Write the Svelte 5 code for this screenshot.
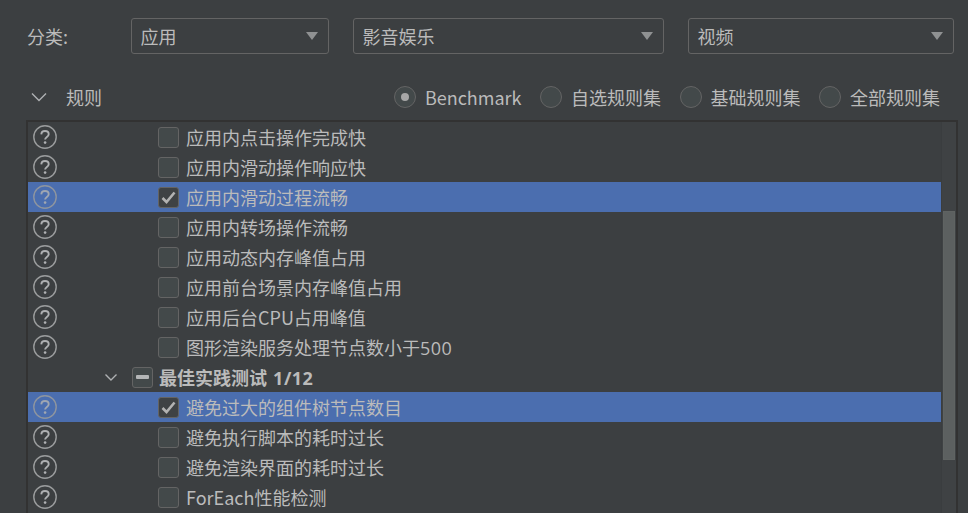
<script>
	const filters = [
		{ label: '应用', width: 198 },
		{ label: '影音娱乐', width: 311 },
		{ label: '视频', width: 266 }
	];
	const ruleSets = [
		{ label: 'Benchmark', checked: true },
		{ label: '自选规则集' },
		{ label: '基础规则集' },
		{ label: '全部规则集' }
	];
	const rows = [
		{ text: '应用内点击操作完成快' },
		{ text: '应用内滑动操作响应快' },
		{ text: '应用内滑动过程流畅', checked: true },
		{ text: '应用内转场操作流畅' },
		{ text: '应用动态内存峰值占用' },
		{ text: '应用前台场景内存峰值占用' },
		{ text: '应用后台CPU占用峰值' },
		{ text: '图形渲染服务处理节点数小于', num: '500' },
		{ text: '最佳实践测试 ', num: '1/12', group: true },
		{ text: '避免过大的组件树节点数目', checked: true },
		{ text: '避免执行脚本的耗时过长' },
		{ text: '避免渲染界面的耗时过长' },
		{ text: 'ForEach性能检测' }
	];
</script>

<div class="page">
	<div class="filters">
		<span class="filter-label">分类:</span>
		{#each filters as f}
			<div class="select" style="width: {f.width}px">
				<span>{f.label}</span>
				<i class="caret"></i>
			</div>
		{/each}
	</div>

	<div class="rules-head">
		<svg class="chevron" width="16" height="10" viewBox="0 0 16 10">
			<path d="M1 1.5 L8 8.5 L15 1.5" fill="none" stroke="#afb1b3" stroke-width="1.4" />
		</svg>
		<span class="rules-title">规则</span>
		<div class="radios">
			{#each ruleSets as r}
				<div class="radio-item">
					<span class="radio" class:on={r.checked}></span>
					<span class="radio-text">{r.label}</span>
				</div>
			{/each}
		</div>
	</div>

	<div class="panel">
		<div class="tree">
			{#each rows as row}
				<div class="row" class:selected={row.checked}>
					{#if row.group}
						<svg class="group-chevron" width="14" height="9" viewBox="0 0 14 9">
							<path d="M1.5 1.5 L7 7 L12.5 1.5" fill="none" stroke="#afb1b3" stroke-width="1.4" />
						</svg>
						<span class="box partial"><i></i></span>
						<span class="group-text">{row.text}<span class="num">{row.num}</span></span>
					{:else}
						<svg class="help" width="24" height="24" viewBox="0 0 24 24">
							<circle cx="12" cy="12" r="11.2" fill="none" stroke="#9a9c9d" stroke-width="1.4" />
							<path d="M8.3 9.4 C8.4 7.1 10 6 12 6 C14.1 6 15.7 7.3 15.7 9.2 C15.7 12 12.1 11.9 12.1 14.6" fill="none" stroke="#afb1b3" stroke-width="1.9" />
							<circle cx="12.1" cy="17.6" r="1.3" fill="#afb1b3" />
						</svg>
						<span class="box">
							{#if row.checked}
								<svg width="15" height="13" viewBox="0 0 15 13">
									<path d="M1.5 7 L5.5 11 L13.5 1.5" fill="none" stroke="#b2b2b2" stroke-width="2.6" />
								</svg>
							{/if}
						</span>
						<span class="row-text">{row.text}{#if row.num}<span class="num">{row.num}</span>{/if}</span>
					{/if}
				</div>
			{/each}
		</div>
		<div class="track">
			<div class="thumb"></div>
		</div>
	</div>
</div>

<style>
	:global(body) {
		margin: 0;
		background: #3c3f41;
	}
	.page {
		width: 968px;
		height: 513px;
		overflow: hidden;
		background: #3c3f41;
		color: #bbbbbb;
		font-family: "Noto Sans CJK SC", "Open Sans", sans-serif;
		font-size: 18px;
		box-sizing: border-box;
		padding-top: 18px;
	}
	.filters {
		display: flex;
		align-items: center;
		padding-left: 27px;
		gap: 24px;
		height: 36px;
	}
	.filter-label {
		width: 80px;
	}
	.select {
		height: 36px;
		box-sizing: border-box;
		border: 1.5px solid #646464;
		border-radius: 3px;
		display: flex;
		align-items: center;
		justify-content: space-between;
		padding: 0 10px 0 8.5px;
	}
	.caret {
		width: 0;
		height: 0;
		border-left: 6.5px solid transparent;
		border-right: 6.5px solid transparent;
		border-top: 8px solid #8f9192;
	}
	.rules-head {
		display: flex;
		align-items: center;
		height: 22px;
		margin-top: 32px;
		padding-left: 31px;
	}
	.rules-title {
		margin-left: 19px;
	}
	.radios {
		margin-left: auto;
		display: flex;
		gap: 18.5px;
		padding-right: 28px;
	}
	.radio-item {
		display: flex;
		align-items: center;
		gap: 9px;
	}
	.radio {
		width: 22px;
		height: 22px;
		box-sizing: border-box;
		border: 1.5px solid #646464;
		border-radius: 50%;
		background: #43494a;
		display: flex;
		align-items: center;
		justify-content: center;
	}
	.radio.on::after {
		content: '';
		width: 8px;
		height: 8px;
		border-radius: 50%;
		background: #a7a7a7;
	}
	.radio-text {
		line-height: 22px;
	}
	.panel {
		margin: 12px 10px 0 26px;
		border: 2px solid #323232;
		border-bottom: 0;
		display: flex;
		height: 400px;
	}
	.tree {
		flex: 1;
		min-width: 0;
	}
	.row {
		height: 30px;
		display: flex;
		align-items: center;
		box-sizing: border-box;
		padding-left: 5px;
		position: relative;
	}
	.row.selected {
		background: #4b6eaf;
	}
	.row.selected .help {
		opacity: 0.85;
	}
	.help {
		flex: none;
		margin-right: 101px;
	}
	.box {
		flex: none;
		width: 21px;
		height: 21px;
		box-sizing: border-box;
		border: 1.5px solid #646464;
		border-radius: 3px;
		background: #43494a;
		display: flex;
		align-items: center;
		justify-content: center;
	}
	.row.selected .box {
		background: #3f4244;
	}
	.box.partial i {
		width: 13px;
		height: 4px;
		background: #b4b6b7;
		border-radius: 1px;
	}
	.row-text {
		margin-left: 7px;
	}
	.num {
		font-family: "Open Sans", sans-serif;
		letter-spacing: 0.5px;
	}
	.group-text .num {
		margin-left: 2px;
	}
	.group-chevron {
		margin-left: 71px;
		margin-right: 14px;
	}
	.group-text {
		margin-left: 6px;
		font-weight: 700;
	}
	.track {
		flex: none;
		width: 15px;
		background: #3f4244;
		border-left: 1px solid #3a3d3f;
		box-sizing: border-box;
	}
	.thumb {
		margin: 89px 1px 0 1px;
		height: 249px;
		background: #5c6060;
		border: 1px solid #5f6362;
		box-sizing: border-box;
	}
</style>
